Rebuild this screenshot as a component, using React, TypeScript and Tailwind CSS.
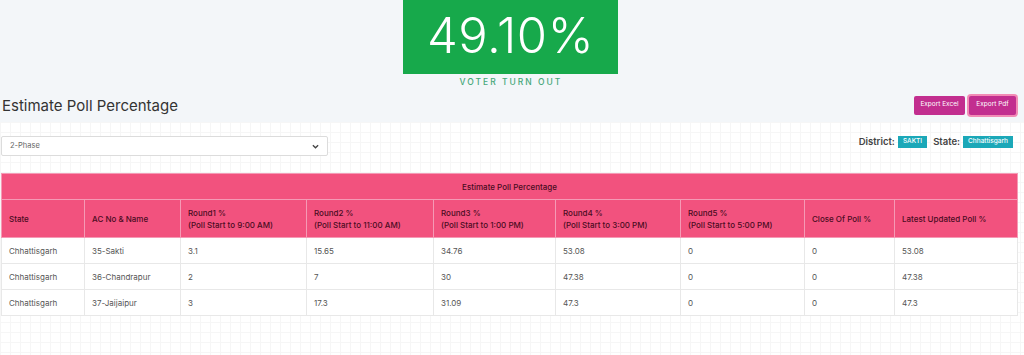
import React from "react";

const rows = [
  ["Chhattisgarh", "35-Sakti", "3.1", "15.65", "34.76", "53.08", "0", "0", "53.08"],
  ["Chhattisgarh", "36-Chandrapur", "2", "7", "30", "47.38", "0", "0", "47.38"],
  ["Chhattisgarh", "37-Jaijaipur", "3", "17.3", "31.09", "47.3", "0", "0", "47.3"],
];

const widths = [83, 96, 126, 127, 122, 125, 124, 90, 123];

const headers: [string, string | null][] = [
  ["State", null],
  ["AC No & Name", null],
  ["Round1 %", "(Poll Start to 9:00 AM)"],
  ["Round2 %", "(Poll Start to 11:00 AM)"],
  ["Round3 %", "(Poll Start to 1:00 PM)"],
  ["Round4 %", "(Poll Start to 3:00 PM)"],
  ["Round5 %", "(Poll Start to 5:00 PM)"],
  ["Close Of Poll %", null],
  ["Latest Updated Poll %", null],
];

export default function App() {
  return (
    <div
      className="w-[1024px] h-[355px] overflow-hidden bg-white text-[#333]"
      style={{ fontFamily: "Inter, 'Noto Sans', sans-serif" }}
    >
      <div className="bg-[#f3f6f9] h-[122px] relative">
        <div className="flex flex-col items-center">
          <div className="w-[215px] h-[74px] bg-[#17a94b] flex items-center justify-center ml-[-3px]">
            <span className="text-white text-[49px] font-light leading-none tracking-[0.5px] mt-[-4px]">49.10%</span>
          </div>
          <div className="mt-[2px] text-[8.5px] tracking-[2px] text-[#46a77a] font-medium ml-[-2px]">VOTER TURN OUT</div>
        </div>
        <div className="flex items-start justify-between px-[2px] mt-[8px]">
          <div className="text-[15px] text-[#333] font-normal mt-[-2px]">Estimate Poll Percentage</div>
          <div className="flex gap-[4px] mr-[6px] mt-[-1px]">
            <button className="h-[19px] w-[51px] bg-[#c22e8f] text-white text-[6.5px] rounded-[2px]">Export Excel</button>
            <button className="h-[19px] w-[47px] bg-[#c22e8f] text-white text-[6.5px] rounded-[2px] shadow-[0_0_0_2px_#f28bb5]">Export Pdf</button>
          </div>
        </div>
      </div>
      <div className="bg-[linear-gradient(#f6f6f6_1px,transparent_1px),linear-gradient(90deg,#f6f6f6_1px,transparent_1px)] bg-[size:10px_10px] h-[233px] pt-[14px]">
        <div className="flex items-center justify-between pl-[1px] pr-[11px]">
          <div className="w-[327px] h-[20px] bg-white border border-[#dcdcdc] rounded-[2px] flex items-center justify-between px-[8px]">
            <span className="text-[7.5px] text-[#666]">2-Phase</span>
            <svg width="7" height="5" viewBox="0 0 8 5">
              <path d="M1 1l3 3 3-3" fill="none" stroke="#444" strokeWidth="1.5" />
            </svg>
          </div>
          <div className="flex items-center gap-[3px] text-[9.5px] font-semibold text-[#444] mt-[-8px]">
            <span>District:</span>
            <span className="bg-[#1ba8b8] text-white text-[6.5px] font-medium px-[5px] h-[12px] flex items-center">SAKTI</span>
            <span className="ml-[3px]">State:</span>
            <span className="bg-[#1ba8b8] text-white text-[6.5px] font-medium px-[5px] h-[12px] flex items-center">Chhattisgarh</span>
          </div>
        </div>
        <table className="mt-[17px] ml-[1px] border-collapse text-[8px] table-fixed w-[1016px]">
          <colgroup>
            {widths.map((w, i) => (
              <col key={i} style={{ width: w }} />
            ))}
          </colgroup>
          <thead>
            <tr className="bg-[#f2527e] h-[26px]">
              <th colSpan={9} className="border border-[#f59ab5] text-center font-medium text-[#4a0c22] text-[8px]">
                Estimate Poll Percentage
              </th>
            </tr>
            <tr className="bg-[#f2527e] h-[38px]">
              {headers.map(([a, b], i) => (
                <th key={i} className="border border-[#f59ab5] text-left font-medium text-[#4a0c22] px-[7px] leading-[12px] align-middle">
                  <div>{a}</div>
                  {b && <div>{b}</div>}
                </th>
              ))}
            </tr>
          </thead>
          <tbody>
            {rows.map((r, i) => (
              <tr key={i} className="bg-white h-[26px]">
                {r.map((c, j) => (
                  <td key={j} className="border border-[#e8e8e8] px-[7px] text-[#555]">
                    {c}
                  </td>
                ))}
              </tr>
            ))}
          </tbody>
        </table>
      </div>
    </div>
  );
}
